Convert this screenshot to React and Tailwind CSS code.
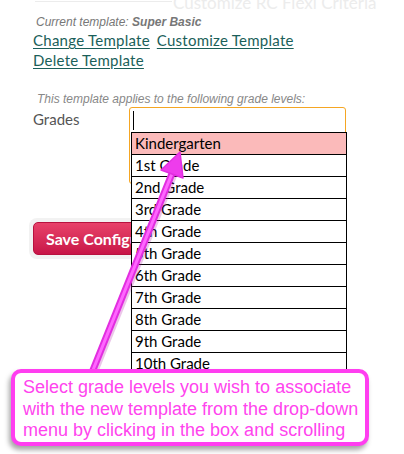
import React from 'react';

const grades = [
  'Kindergarten', '1st Grade', '2nd Grade', '3rd Grade', '4th Grade', '5th Grade',
  '6th Grade', '7th Grade', '8th Grade', '9th Grade', '10th Grade', '11th Grade', '12th Grade',
];

const ui = { fontFamily: 'Lato, "Open Sans", sans-serif' };
const helv = { fontFamily: '"Liberation Sans", Arial, sans-serif' };

const Arrow = () => (
  <svg className="absolute left-0 top-0 pointer-events-none z-[15]" width="404" height="454" viewBox="0 0 404 454">
    <line x1="93" y1="370" x2="173" y2="171" stroke="#b01aa8" strokeOpacity="0.25" strokeWidth="8" strokeLinecap="round" transform="translate(1 2)" />
    <line x1="93" y1="370" x2="173" y2="171" stroke="#e22ee0" strokeWidth="7" strokeLinecap="round" />
    <line x1="93" y1="370" x2="173" y2="171" stroke="#ff66ff" strokeWidth="3" strokeLinecap="round" />
    <polygon points="180,152 183,178 161,170" fill="#ee3cec" stroke="#e22ee0" strokeWidth="1.5" strokeLinejoin="round" />
  </svg>
);

export default function App() {
  return (
    <div className="relative w-[404px] h-[454px] overflow-hidden bg-white" style={ui}>
      {/* faded header remnant */}
      <div className="flex items-start h-[14px]">
        <div className="ml-[35px] w-[137px] h-[2px] border-b border-[#ececec]" />
        <div className="-mt-[7px] ml-[1px] text-[17px] leading-[20px] text-[#ececec] whitespace-nowrap">Customize RC Flexi Criteria</div>
      </div>

      <div className="pl-[33px]">
        <div className="pl-[3px] text-[12px] leading-[16px] italic text-[#777]" style={helv}>
          Current template: <span className="font-bold">Super Basic</span>
        </div>
        <div className="text-[15px] tracking-[0.25px] leading-[20px] text-[#1b5f5a] underline underline-offset-2">
          <span>Change Template</span>
          <span className="ml-[7px]">Customize Template</span>
        </div>
        <div className="text-[15px] tracking-[0.25px] leading-[20px] text-[#1b5f5a] underline underline-offset-2">Delete Template</div>

        <div className="mt-[22px] pl-[4px] text-[12px] leading-[14px] italic text-[#888]" style={helv}>
          This template applies to the following grade levels:
        </div>

        <div className="flex mt-[1px]">
          <div className="w-[96px] pt-[3px] text-[15px] leading-[18px] text-[#555]">Grades</div>
          <div className="relative w-[217px] h-[77px] rounded-[3px] border border-[#f5a623]">
            <div className="ml-[3px] mt-[3px] w-[1px] h-[19px] bg-black" />
            {/* dropdown */}
            <div className="absolute left-[1px] top-[24px] w-[216px] border-t border-black z-10">
              {grades.map((g, i) => (
                <div
                  key={g}
                  className={`h-[22px] border-x border-b border-black pl-[3px] text-[15px] leading-[21px] text-black ${i === 0 ? 'bg-[#fbbaba]' : 'bg-white'}`}
                >
                  {g}
                </div>
              ))}
            </div>
          </div>
        </div>

        <div className="mt-[34px] -ml-[4px] inline-block rounded-[8px] bg-[#f2f2f2] p-[4px]">
          <div className="w-[150px] h-[33px] rounded-[5px] bg-gradient-to-b from-[#e8416a] to-[#c81448] border border-[#b8123f] pl-[12px] text-[16px] leading-[31px] font-bold text-white whitespace-nowrap">
            Save Configuration
          </div>
        </div>
      </div>

      <Arrow />

      {/* callout */}
      <div
        className="absolute left-[11px] top-[369px] w-[358px] h-[77px] rounded-[10px] border-[4px] border-[#ff3ef0] bg-white pl-[8px] pt-[4px] text-[18px] leading-[21.5px] text-[#ff44ee] shadow-[-2px_4px_5px_rgba(0,0,0,0.35)] z-20 whitespace-nowrap"
        style={helv}
      >
        <div>Select grade levels you wish to associate</div>
        <div>with the new template from the drop-down</div>
        <div>menu by clicking in the box and scrolling</div>
      </div>
    </div>
  );
}
